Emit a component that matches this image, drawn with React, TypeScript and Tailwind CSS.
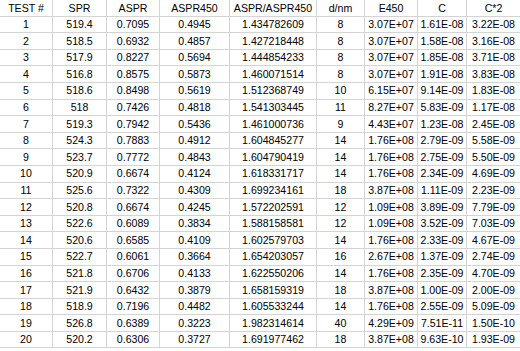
const headers = ["TEST #", "SPR", "ASPR", "ASPR450", "ASPR/ASPR450", "d/nm", "E450", "C", "C*2"];

const rows: string[][] = [
  ["1", "519.4", "0.7095", "0.4945", "1.434782609", "8", "3.07E+07", "1.61E-08", "3.22E-08"],
  ["2", "518.5", "0.6932", "0.4857", "1.427218448", "8", "3.07E+07", "1.58E-08", "3.16E-08"],
  ["3", "517.9", "0.8227", "0.5694", "1.444854233", "8", "3.07E+07", "1.85E-08", "3.71E-08"],
  ["4", "516.8", "0.8575", "0.5873", "1.460071514", "8", "3.07E+07", "1.91E-08", "3.83E-08"],
  ["5", "518.6", "0.8498", "0.5619", "1.512368749", "10", "6.15E+07", "9.14E-09", "1.83E-08"],
  ["6", "518", "0.7426", "0.4818", "1.541303445", "11", "8.27E+07", "5.83E-09", "1.17E-08"],
  ["7", "519.3", "0.7942", "0.5436", "1.461000736", "9", "4.43E+07", "1.23E-08", "2.45E-08"],
  ["8", "524.3", "0.7883", "0.4912", "1.604845277", "14", "1.76E+08", "2.79E-09", "5.58E-09"],
  ["9", "523.7", "0.7772", "0.4843", "1.604790419", "14", "1.76E+08", "2.75E-09", "5.50E-09"],
  ["10", "520.9", "0.6674", "0.4124", "1.618331717", "14", "1.76E+08", "2.34E-09", "4.69E-09"],
  ["11", "525.6", "0.7322", "0.4309", "1.699234161", "18", "3.87E+08", "1.11E-09", "2.23E-09"],
  ["12", "520.8", "0.6674", "0.4245", "1.572202591", "12", "1.09E+08", "3.89E-09", "7.79E-09"],
  ["13", "522.6", "0.6089", "0.3834", "1.588158581", "12", "1.09E+08", "3.52E-09", "7.03E-09"],
  ["14", "520.6", "0.6585", "0.4109", "1.602579703", "14", "1.76E+08", "2.33E-09", "4.67E-09"],
  ["15", "522.7", "0.6061", "0.3664", "1.654203057", "16", "2.67E+08", "1.37E-09", "2.74E-09"],
  ["16", "521.8", "0.6706", "0.4133", "1.622550206", "14", "1.76E+08", "2.35E-09", "4.70E-09"],
  ["17", "521.9", "0.6432", "0.3879", "1.658159319", "18", "3.87E+08", "1.00E-09", "2.00E-09"],
  ["18", "518.9", "0.7196", "0.4482", "1.605533244", "14", "1.76E+08", "2.55E-09", "5.09E-09"],
  ["19", "526.8", "0.6389", "0.3223", "1.982314614", "40", "4.29E+09", "7.51E-11", "1.50E-10"],
  ["20", "520.2", "0.6306", "0.3727", "1.691977462", "18", "3.87E+08", "9.63E-10", "1.93E-09"],
];

function Row({ cells }: { cells: string[] }) {
  return (
    <div className="grid h-[16.6px] grid-cols-[53px_54px_53px_70px_87px_48px_53px_49px_53px] border-b border-[#d4d4d4]">
      {cells.map((c, i) => (
        <div
          key={i}
          className={`flex items-center justify-center leading-none ${i < 8 ? "border-r border-[#d4d4d4]" : ""}`}
        >
          {c}
        </div>
      ))}
    </div>
  );
}

export default function App() {
  return (
    <div className="h-[351px] w-[520px] overflow-hidden bg-white font-['Liberation_Sans',Arial,sans-serif] text-[10.6px] text-black">
      <Row cells={headers} />
      {rows.map((r) => (
        <Row key={r[0]} cells={r} />
      ))}
    </div>
  );
}
